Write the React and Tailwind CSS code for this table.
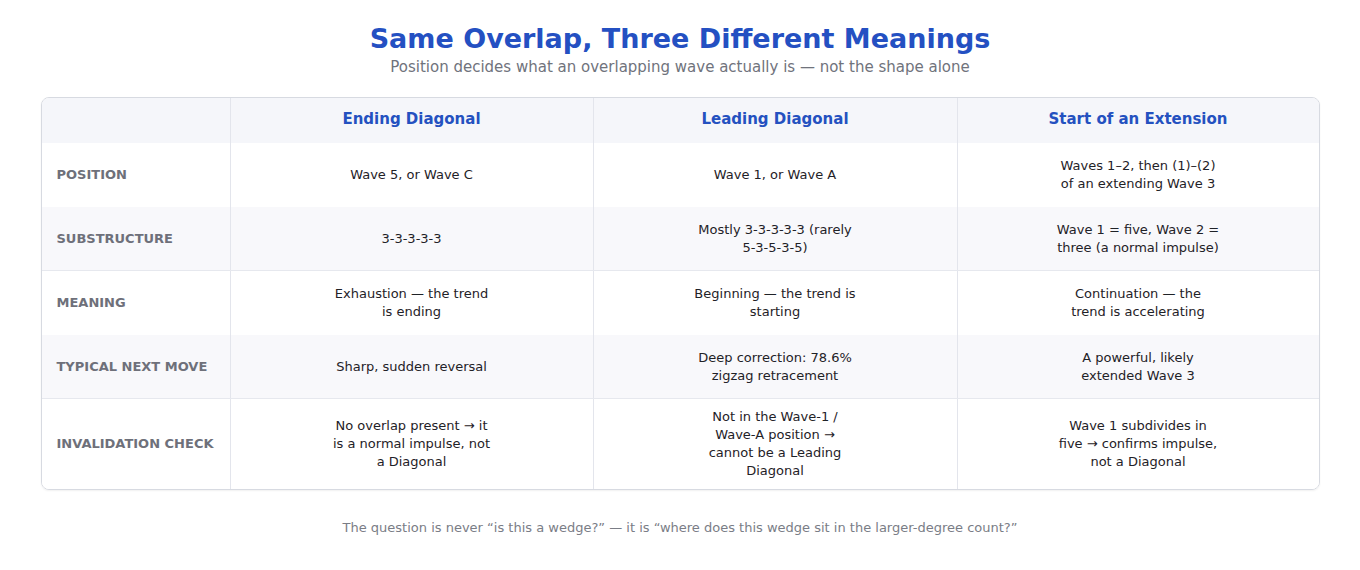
import React from "react";

const rows = [
  {
    label: "POSITION",
    cells: [["Wave 5, or Wave C"], ["Wave 1, or Wave A"], ["Waves 1–2, then (1)–(2)", "of an extending Wave 3"]],
    h: "h-[64px]",
    bg: "bg-white",
  },
  {
    label: "SUBSTRUCTURE",
    cells: [["3-3-3-3-3"], ["Mostly 3-3-3-3-3 (rarely", "5-3-5-3-5)"], ["Wave 1 = five, Wave 2 =", "three (a normal impulse)"]],
    h: "h-[64px]",
    bg: "bg-[#f8f8fb] border-b border-[#e6e8ee]",
  },
  {
    label: "MEANING",
    cells: [["Exhaustion — the trend", "is ending"], ["Beginning — the trend is", "starting"], ["Continuation — the", "trend is accelerating"]],
    h: "h-[64px]",
    bg: "bg-white",
  },
  {
    label: "TYPICAL NEXT MOVE",
    cells: [["Sharp, sudden reversal"], ["Deep correction: 78.6%", "zigzag retracement"], ["A powerful, likely", "extended Wave 3"]],
    h: "h-[64px]",
    bg: "bg-[#f8f8fb] border-b border-[#e6e8ee]",
  },
  {
    label: "INVALIDATION CHECK",
    cells: [
      ["No overlap present → it", "is a normal impulse, not", "a Diagonal"],
      ["Not in the Wave-1 /", "Wave-A position →", "cannot be a Leading", "Diagonal"],
      ["Wave 1 subdivides in", "five → confirms impulse,", "not a Diagonal"],
    ],
    h: "h-[90px]",
    bg: "bg-white",
  },
];

const cols = "grid grid-cols-[189px_363px_364px_1fr]";

export default function App() {
  return (
    <div
      className="w-[1360px] h-[570px] bg-white flex flex-col items-center pt-[22px]"
      style={{ fontFamily: '"DejaVu Sans", "Liberation Sans", sans-serif' }}
    >
      <h1 className="text-[27px] leading-[33px] font-bold text-[#2450c2]">
        Same Overlap, Three Different Meanings
      </h1>
      <p className="mt-[2px] text-[15px] leading-[20px] text-[#70737c]">
        Position decides what an overlapping wave actually is — not the shape alone
      </p>

      <div className="mt-[20px] w-[1279px] border border-[#d7dae1] rounded-[8px] overflow-hidden shadow-[0_1px_2px_rgba(0,0,0,0.06)]">
        <div className={`${cols} h-[45px] bg-[#f5f6fa]`}>
          <div className="border-r border-[#e3e5ec]" />
          {["Ending Diagonal", "Leading Diagonal", "Start of an Extension"].map((t, i) => (
            <div
              key={t}
              className={`flex items-center justify-center pb-[2px] text-[15px] font-bold text-[#2451c0] ${i < 2 ? "border-r border-[#e3e5ec]" : ""}`}
            >
              {t}
            </div>
          ))}
        </div>
        {rows.map((r) => (
          <div key={r.label} className={`${cols} ${r.h} ${r.bg}`}>
            <div className="flex items-center pl-[15px] text-[13px] font-bold text-[#6e707a] border-r border-[#e3e5ec]">
              {r.label}
            </div>
            {r.cells.map((lines, i) => (
              <div
                key={i}
                className={`flex flex-col items-center justify-center text-center text-[13px] leading-[18px] text-[#1f2227] ${i < 2 ? "border-r border-[#e3e5ec]" : ""}`}
              >
                {lines.map((l, j) => (
                  <span key={j}>{l}</span>
                ))}
              </div>
            ))}
          </div>
        ))}
      </div>

      <p className="mt-[28px] text-[13px] leading-[20px] text-[#7a7d86]">
        The question is never “is this a wedge?” — it is “where does this wedge sit in the larger-degree count?”
      </p>
    </div>
  );
}
